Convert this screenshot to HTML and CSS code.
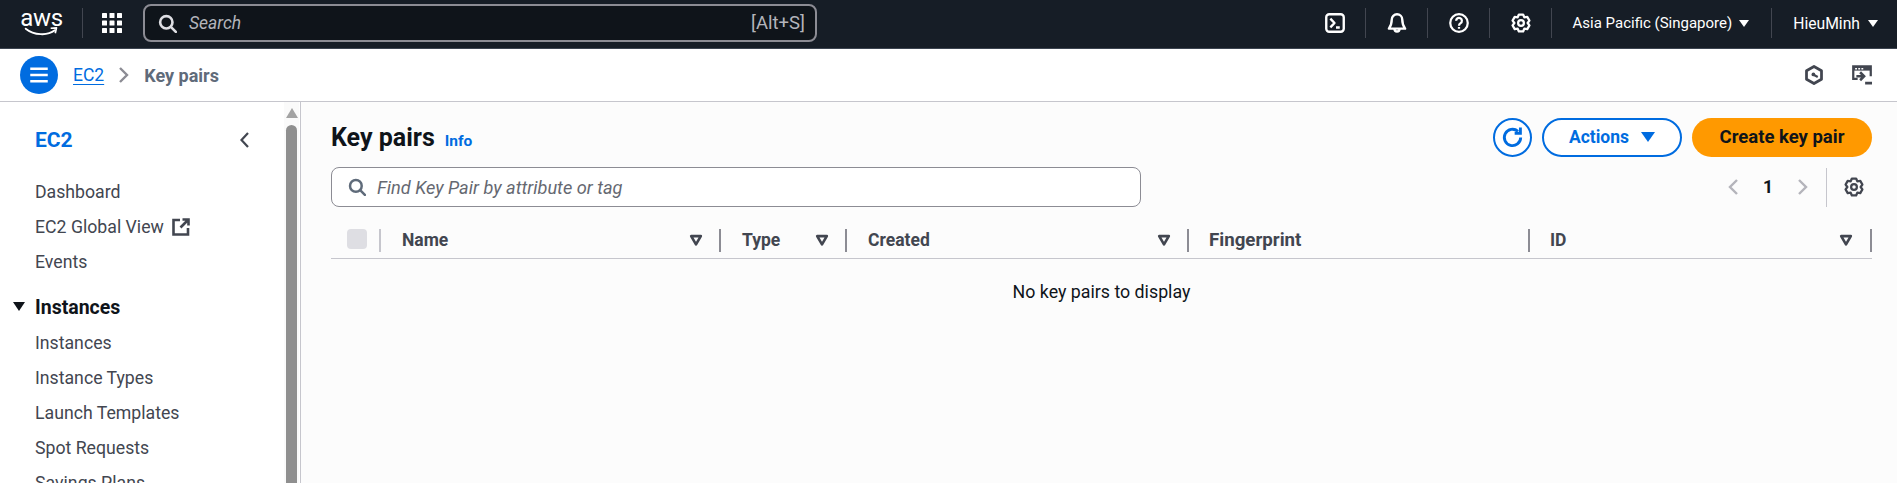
FILE: index.html
```html
<!DOCTYPE html>
<html lang="en">
<head>
<meta charset="utf-8">
<title>Key pairs | EC2</title>
<link rel="stylesheet" href="styles.css">
</head>
<body>
<svg class="defs" aria-hidden="true"><defs>
<g id="gear" fill="none" stroke="currentColor" stroke-width="1.8" stroke-linejoin="round"><path d="M6.31 1.21H9.69L10.65 3.41 13.04 3.14 14.73 6.07 13.3 8 14.73 9.93 13.04 12.86 10.65 12.59 9.69 14.79H6.31L5.35 12.59 2.96 12.86 1.27 9.93 2.7 8 1.27 6.07 2.96 3.14 5.35 3.41Z"/><circle cx="8" cy="8" r="2.3"/></g>
<g id="mag" fill="none" stroke="currentColor" stroke-width="2.2"><circle cx="7" cy="7" r="5.2"/><path d="M10.8 10.8 15 15" stroke-linecap="round"/></g>
<g id="filter"><path d="M2.5 3.500h11L8 13Z" fill="none" stroke="currentColor" stroke-width="3" stroke-linejoin="round"/></g>
</defs></svg>

<header class="topbar">
  <div class="brand">
    <div class="logo">
      <span class="logo-text">aws</span>
      <svg class="logo-smile" viewBox="0 0 40 12"><path d="M1 2c10 8 26 9 35 2" fill="none" stroke="#fff" stroke-width="2.2" stroke-linecap="round"/><path d="M31 1.5l7-.5-1.5 6.5" fill="none" stroke="#fff" stroke-width="2" stroke-linejoin="round"/></svg>
    </div>
    <span class="vline logo-rule"></span>
    <svg class="apps" viewBox="0 0 20 20" fill="#fff"><rect x="0" y="0" width="5" height="5" rx=".6"/><rect x="7.5" y="0" width="5" height="5" rx=".6"/><rect x="15" y="0" width="5" height="5" rx=".6"/><rect x="0" y="7.5" width="5" height="5" rx=".6"/><rect x="7.5" y="7.5" width="5" height="5" rx=".6"/><rect x="15" y="7.5" width="5" height="5" rx=".6"/><rect x="0" y="15" width="5" height="5" rx=".6"/><rect x="7.5" y="15" width="5" height="5" rx=".6"/><rect x="15" y="15" width="5" height="5" rx=".6"/></svg>
  </div>
  <div class="global-search">
    <svg class="icon-20 search-light" viewBox="0 0 16 16"><use href="#mag"/></svg>
    <span class="global-placeholder">Search</span>
    <span class="shortcut">[Alt+S]</span>
  </div>
  <nav class="top-actions">
    <svg class="icon-20" viewBox="0 0 16 16" fill="none" stroke="currentColor" stroke-width="1.9"><rect x="1" y="1" width="14" height="14" rx="2.4"/><path d="M4.3 4.500 7.600 8l-3.300 3.500M8.800 11.600h3" stroke-linejoin="round"/></svg>
    <span class="vline"></span>
    <svg class="icon-20" viewBox="0 0 16 16" fill="none" stroke="currentColor" stroke-width="1.9" stroke-linejoin="round"><path d="M8 1a4.200 4.200 0 0 0-4.200 4.200c0 3.600-.6 5-2.300 7.300h13c-1.700-2.300-2.300-3.700-2.300-7.300A4.200 4.200 0 0 0 8 1Z"/><path d="M6 12.800c0 2.600 4 2.600 4 0"/></svg>
    <span class="vline"></span>
    <svg class="icon-20" viewBox="0 0 16 16" fill="none" stroke="currentColor" stroke-width="1.8"><circle cx="8" cy="8" r="7"/><path d="M5.700 6.200a2.300 2.300 0 1 1 3.600 1.900c-.9.600-1.300 1-1.300 2"/><path d="M8 11.200v1.400"/></svg>
    <span class="vline"></span>
    <svg class="icon-20" viewBox="0 0 16 16"><use href="#gear"/></svg>
    <span class="vline"></span>
    <span class="top-label region">Asia Pacific (Singapore)</span>
    <span class="caret-white caret-region"></span>
    <span class="vline"></span>
    <span class="top-label user">HieuMinh</span>
    <span class="caret-white caret-user"></span>
  </nav>
</header>

<div class="crumbbar">
  <button class="menu-btn" type="button" aria-label="Open navigation">
    <svg viewBox="0 0 16 16" fill="none" stroke="#fff" stroke-width="2"><path d="M1 3h14M1 8h14M1 13h14"/></svg>
  </button>
  <a class="crumb-link" href="#">EC2</a>
  <svg class="crumb-sep" viewBox="0 0 11 16" fill="none" stroke="#8c8c94" stroke-width="2.400"><path d="M2 1l7 7-7 7"/></svg>
  <span class="crumb-current">Key pairs</span>
  <div class="crumb-tools">
    <svg class="icon-20" viewBox="0 0 16 16" fill="none" stroke="currentColor" stroke-width="2.200" stroke-linejoin="round"><path d="M8 1.200l6 3.400v6.800L8 14.800l-6-3.400V4.600Z"/><circle cx="7.500" cy="7.500" r="1.500" fill="currentColor" stroke="none"/><path d="M8 8l3 1.600" stroke-width="1.800"/></svg>
    <svg class="icon-20" viewBox="0 0 16 16" fill="none" stroke="currentColor" stroke-width="1.800"><path d="M4.500 11H1V1h14v8"/><path d="M1 3h14" stroke-width="3"/><path d="M2.500 3h1.500M5 3h1.500M7.500 3H9" stroke="#fff" stroke-width="1.200"/><path d="M3.500 9h5.500M6.500 5.800 9.700 9 6.500 12.200" stroke-width="2"/><path d="M10.500 14.500H16" stroke-width="2.200"/></svg>
  </div>
</div>

<div class="workspace">
  <aside class="sidenav">
    <div class="nav-inner">
      <div class="nav-head">
        <span class="nav-title">EC2</span>
        <svg class="nav-close" viewBox="0 0 9 16" fill="none" stroke="#424650" stroke-width="2.2"><path d="M8 1 1.500 8 8 15"/></svg>
      </div>
      <a class="nav-item" href="#">Dashboard</a>
      <a class="nav-item" href="#">EC2 Global View <svg class="ext" viewBox="0 0 18 18" fill="none" stroke="currentColor" stroke-width="2.600"><path d="M8 2H1.500v14.500H16V10M10.500 1.500H16.500V7.500M16 2 8.500 9.500"/></svg></a>
      <a class="nav-item" href="#">Events</a>
      <div class="nav-section"><span class="nav-caret"></span>Instances</div>
      <a class="nav-item" href="#">Instances</a>
      <a class="nav-item" href="#">Instance Types</a>
      <a class="nav-item" href="#">Launch Templates</a>
      <a class="nav-item" href="#">Spot Requests</a>
      <a class="nav-item" href="#">Savings Plans</a>
    </div>
    <div class="scrollbar">
      <span class="scroll-up"></span>
      <span class="scroll-thumb"></span>
    </div>
  </aside>

  <main class="content">
    <div class="page-head">
      <div class="title-wrap">
        <h1 class="page-title">Key pairs</h1>
        <a class="info" href="#">Info</a>
      </div>
      <div class="page-actions">
        <button class="btn-round" type="button" aria-label="Refresh">
          <svg viewBox="0 0 16 16" fill="none" stroke="#006ce0" stroke-width="2"><path d="M13.700 8A5.700 5.700 0 1 1 11.800 3.700"/><path d="M13.500 1v4h-4" stroke-linejoin="miter"/></svg>
        </button>
        <button class="btn-outline" type="button">Actions <span class="caret-blue"></span></button>
        <button class="btn-primary" type="button">Create key pair</button>
      </div>
    </div>

    <div class="toolbar">
      <div class="filter-box">
        <svg class="icon-20 filter-mag" viewBox="0 0 16 16"><use href="#mag"/></svg>
        <span class="filter-placeholder">Find Key Pair by attribute or tag</span>
      </div>
      <div class="pager">
        <svg class="pager-arrow" viewBox="0 0 10 16" fill="none" stroke="#b4b4bb" stroke-width="2.400"><path d="M9 1 2 8l7 7"/></svg>
        <span class="pager-num">1</span>
        <svg class="pager-arrow" viewBox="0 0 10 16" fill="none" stroke="#b4b4bb" stroke-width="2.400"><path d="M1 1l7 7-7 7"/></svg>
        <span class="pager-rule"></span>
        <svg class="icon-20 pager-gear" viewBox="0 0 16 16"><use href="#gear"/></svg>
      </div>
    </div>

    <div class="thead">
      <div class="th th-check"><span class="checkbox"></span></div>
      <div class="th th-name"><span class="th-label">Name</span><svg class="th-sort" viewBox="0 0 16 16"><use href="#filter"/></svg></div>
      <div class="th th-type"><span class="th-label">Type</span><svg class="th-sort" viewBox="0 0 16 16"><use href="#filter"/></svg></div>
      <div class="th th-created"><span class="th-label">Created</span><svg class="th-sort" viewBox="0 0 16 16"><use href="#filter"/></svg></div>
      <div class="th th-finger"><span class="th-label">Fingerprint</span></div>
      <div class="th th-id"><span class="th-label">ID</span><svg class="th-sort" viewBox="0 0 16 16"><use href="#filter"/></svg></div>
    </div>
    <p class="empty">No key pairs to display</p>
  </main>
</div>
</body>
</html>
```
FILE: styles.css
```css
* { box-sizing: border-box; }
html, body { margin: 0; height: 100%; overflow: hidden; }
body { display: flex; flex-direction: column; font-family: Roboto, "Noto Sans", sans-serif; font-size: 17.5px; color: #0f141a; background: #fff; }
.defs { position: absolute; width: 0; height: 0; }
a { text-decoration: none; color: inherit; }
button { font-family: inherit; padding: 0; cursor: pointer; }
.icon-20 { width: 20px; height: 20px; flex: none; display: block; }

.topbar { flex: none; height: 49px; padding-bottom: 2px; background: #161d26; border-bottom: 1px solid #3c4450; color: #fff; display: flex; align-items: center; }
.brand { display: flex; align-items: center; width: 143px; flex: none; padding-left: 22px; }
.logo { width: 39px; height: 28px; display: flex; flex-direction: column; align-items: center; flex: none; }
.logo-text { font-size: 24px; line-height: 18px; font-weight: 400; letter-spacing: -.3px; }
.logo-smile { width: 39px; height: 11px; display: block; }
.vline { width: 1px; height: 30px; background: #424650; flex: none; display: block; }
.logo-rule { margin-left: 21px; }
.apps { width: 20px; height: 20px; margin-left: 19px; flex: none; }
.global-search { flex: none; width: 674px; height: 38px; background: #0f141a; border: 2px solid #8c8c94; border-radius: 8px; display: flex; align-items: center; padding: 0 10px 0 13px; color: #dedee3; }
.search-light { width: 19px; height: 19px; }
.global-placeholder { font-style: italic; margin-left: 12px; color: #b4b4bb; }
.shortcut { margin-left: auto; color: #b4b4bb; font-size: 18.5px; }
.top-actions { margin-left: auto; display: flex; align-items: center; padding-right: 19px; }
.top-actions .vline { margin: 0 21px 0 20px; }
.top-actions .icon-20 { color: #fff; }
.top-label { white-space: nowrap; }
.region { font-size: 15px; }
.user { font-size: 15.7px; }
.caret-white { width: 0; height: 0; margin-left: 7px; border-left: 5px solid transparent; border-right: 5px solid transparent; border-top: 7px solid #fff; }
.caret-region { margin-right: 2px; }
.caret-user { margin-left: 8px; }

.crumbbar { flex: none; height: 53px; background: #fff; border-bottom: 1px solid #c6c6cd; display: flex; align-items: center; padding: 0 25px 0 20px; }
.menu-btn { width: 38px; height: 38px; border: 0; border-radius: 50%; background: #006ce0; display: flex; align-items: center; justify-content: center; flex: none; }
.menu-btn svg { width: 20px; height: 20px; display: block; }
.crumb-link { margin-left: 15px; color: #006ce0; text-decoration: underline; text-underline-offset: 3px; }
.crumb-sep { width: 11px; height: 16px; margin: 0 15px 0 14px; flex: none; }
.crumb-current { color: #5f6b7a; font-weight: 700; font-size: 18px; }
.crumb-tools { margin-left: auto; display: flex; gap: 28px; color: #424650; }

.workspace { flex: 1; min-height: 0; display: flex; }
.sidenav { flex: none; width: 301px; background: #fff; border-right: 1px solid #c6c6cd; display: flex; overflow: hidden; }
.nav-inner { flex: none; width: 284px; padding: 0 0 0 35px; }
.nav-head { display: flex; align-items: center; justify-content: space-between; height: 72px; padding: 4px 35px 0 0; }
.nav-title { color: #006ce0; font-size: 21px; font-weight: 700; }
.nav-close { width: 9px; height: 16px; flex: none; }
.nav-item { display: flex; align-items: center; height: 35px; color: #424650; white-space: nowrap; font-size: 17.7px; }
.ext { width: 18px; height: 18px; margin-left: 8px; }
.nav-section { position: relative; height: 36px; margin-top: 10px; display: flex; align-items: center; font-weight: 700; font-size: 19.5px; color: #0f141a; }
.nav-caret { position: absolute; left: -22px; top: 13px; width: 0; height: 0; border-left: 6px solid transparent; border-right: 6px solid transparent; border-top: 9px solid #0f141a; }
.scrollbar { flex: none; width: 15px; background: #fafafa; display: flex; flex-direction: column; align-items: center; padding-top: 6px; }
.scroll-up { width: 0; height: 0; border-left: 6.500px solid transparent; border-right: 6.500px solid transparent; border-bottom: 10px solid #a3a3a3; flex: none; }
.scroll-thumb { width: 11px; flex: 1; margin-top: 7px; background: #8f8f8f; border-radius: 6px 6px 0 0; }

.content { flex: 1; min-width: 0; background: #fcfcfc; padding: 16px 25px 0 30px; }
.page-head { display: flex; justify-content: space-between; align-items: center; height: 39px; }
.title-wrap { display: flex; align-items: baseline; gap: 10px; }
.page-title { margin: 0; font-size: 25px; font-weight: 700; line-height: 39px; }
.info { color: #006ce0; font-size: 15.5px; font-weight: 700; }
.page-actions { display: flex; gap: 10px; }
.btn-round { width: 39px; height: 39px; border-radius: 50%; border: 2px solid #006ce0; background: #fff; display: flex; align-items: center; justify-content: center; }
.btn-round svg { width: 23px; height: 23px; display: block; }
.btn-outline { width: 140px; height: 39px; padding-bottom: 2px; border-radius: 20px; border: 2px solid #006ce0; background: #fff; color: #006ce0; font-size: 17.5px; font-weight: 700; display: flex; align-items: center; justify-content: center; gap: 12px; }
.caret-blue { width: 0; height: 0; border-left: 7px solid transparent; border-right: 7px solid transparent; border-top: 10px solid #006ce0; }
.btn-primary { width: 180px; height: 39px; padding-bottom: 2px; border-radius: 20px; border: 0; background: #ff9900; color: #0f141a; font-size: 18.5px; font-weight: 700; }

.toolbar { display: flex; justify-content: space-between; align-items: center; margin-top: 10px; height: 40px; }
.filter-box { width: 810px; height: 40px; background: #fff; border: 1px solid #8c8c94; border-radius: 8px; display: flex; align-items: center; padding-left: 16px; }
.filter-mag { color: #5f6b7a; width: 18px; height: 18px; }
.filter-placeholder { margin-left: 11px; font-style: italic; color: #656871; font-size: 18.2px; }
.pager { display: flex; align-items: center; height: 40px; }
.pager-arrow { width: 10px; height: 16px; flex: none; }
.pager-num { width: 60px; text-align: center; font-weight: 700; }
.pager-rule { width: 1px; height: 39px; background: #c6c6cd; margin: 0 17px 0 18px; }
.pager-gear { color: #424650; margin-right: 8px; }

.thead { display: flex; height: 36px; margin-top: 16px; padding-top: 6px; border-bottom: 1px solid #c6c6cd; }
.th { position: relative; display: flex; align-items: flex-start; justify-content: space-between; padding-right: 18px; height: 23px; font-weight: 700; color: #424650; flex: none; }
.th::after { content: ""; position: absolute; right: 0; top: 0; width: 2px; height: 23px; background: #8c8c94; }
.th-check { width: 50px; padding: 0 0 0 16px; }
.th-check::after { background: #c6c6cd; }
.checkbox { width: 20px; height: 20px; background: #dedee3; border-radius: 4px; }
.th-name { width: 340px; padding-left: 21px; }
.th-type { width: 126px; padding-left: 21px; }
.th-created { width: 342px; padding-left: 21px; }
.th-finger { width: 341px; padding-left: 20px; font-size: 18.700px; }
.th-id { width: 342px; padding-left: 20px; padding-right: 19px; }
.th-label { line-height: 23px; }
.th-sort { width: 14px; height: 14px; margin-top: 4px; color: #424650; flex: none; }
.empty { margin: 21px 0 0; text-align: center; color: #0f141a; line-height: 24px; font-size: 17.8px; }
```
